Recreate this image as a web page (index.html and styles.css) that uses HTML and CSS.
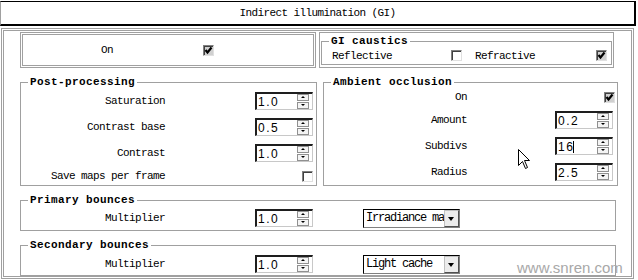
FILE: index.html
```html
<!DOCTYPE html>
<html lang="en">
<head>
    <meta charset="UTF-8">
    <title>Indirect illumination (GI)</title>
    <link rel="stylesheet" href="styles.css">
</head>
<body>
    <div class="title">Indirect illumination (GI)</div>

    <div class="rollout">
        <div class="top-row">
            <div class="on-box">
                <span class="on-label">On</span>
                <span class="check on"><svg viewBox="0 0 9 9"><path d="M1.5 4L3.5 6.5L7.5 1.5" /></svg></span>
            </div>
            <div class="caustics-box">
                <fieldset class="group caustics">
                    <legend>GI caustics</legend>
                    <div class="caustics-row">
                        <span class="c-label">Reflective</span>
                        <span class="check"></span>
                        <span class="c-label second">Refractive</span>
                        <span class="check on"><svg viewBox="0 0 9 9"><path d="M1.5 4L3.5 6.5L7.5 1.5" /></svg></span>
                    </div>
                </fieldset>
            </div>
        </div>

        <div class="mid-row">
            <fieldset class="group post">
                <legend>Post-processing</legend>
                <div class="rows">
                    <span class="label">Saturation</span>
                    <div class="spin"><span class="val">1.0</span><span class="arrows"><i class="up"></i><i class="down"></i></span></div>

                    <span class="label">Contrast base</span>
                    <div class="spin"><span class="val">0.5</span><span class="arrows"><i class="up"></i><i class="down"></i></span></div>

                    <span class="label">Contrast</span>
                    <div class="spin"><span class="val">1.0</span><span class="arrows"><i class="up"></i><i class="down"></i></span></div>

                    <span class="label">Save maps per frame</span>
                    <span class="check"></span>
                </div>
            </fieldset>

            <fieldset class="group ao">
                <legend>Ambient occlusion</legend>
                <div class="rows">
                    <span class="label">On</span>
                    <span class="check on"><svg viewBox="0 0 9 9"><path d="M1.5 4L3.5 6.5L7.5 1.5" /></svg></span>

                    <span class="label">Amount</span>
                    <div class="spin"><span class="val">0.2</span><span class="arrows"><i class="up"></i><i class="down"></i></span></div>

                    <span class="label">Subdivs</span>
                    <div class="spin"><span class="val">16<b class="caret"></b></span><span class="arrows"><i class="up"></i><i class="down"></i></span></div>

                    <span class="label">Radius</span>
                    <div class="spin"><span class="val">2.5</span><span class="arrows"><i class="up"></i><i class="down"></i></span></div>
                </div>
            </fieldset>
        </div>

        <fieldset class="group bounce primary">
            <legend>Primary bounces</legend>
            <div class="bounce-row">
                <span class="label">Multiplier</span>
                <div class="spin"><span class="val">1.0</span><span class="arrows"><i class="up"></i><i class="down"></i></span></div>
                <div class="drop"><span class="drop-text">Irradiance map</span><span class="drop-btn"></span></div>
            </div>
        </fieldset>

        <fieldset class="group bounce secondary">
            <legend>Secondary bounces</legend>
            <div class="bounce-row">
                <span class="label">Multiplier</span>
                <div class="spin"><span class="val">1.0</span><span class="arrows"><i class="up"></i><i class="down"></i></span></div>
                <div class="drop"><span class="drop-text">Light cache</span><span class="drop-btn"></span></div>
            </div>
        </fieldset>
    </div>

    <div class="watermark">www.snren.com</div>

    <svg class="cursor" width="13" height="21" viewBox="0 0 13 21">
        <path d="M0.5 0.5L0.5 16.5L4.5 12.5L7.5 19.5L9.5 18.5L6.5 11.5L11.5 11.5Z" fill="#fff" stroke="#000" stroke-width="1"/>
    </svg>
</body>
</html>
```

FILE: styles.css
```css
:root {
    --line: #a0a0a0;
    --dark: #1e1e1e;
    --light: #c8c8c8;
}

body {
    margin: 0;
    width: 638px;
    height: 280px;
    overflow: hidden;
    position: relative;
    background: #fff;
    color: #000;
    font-family: "Liberation Mono", "DejaVu Sans Mono", monospace;
    font-size: 11px;
    letter-spacing: -0.6px;
}

.title {
    box-sizing: border-box;
    margin-top: 1px;
    width: 636px;
    height: 25px;
    border-top: 1px solid #000;
    border-bottom: 2px solid #000;
    border-left: 1px solid var(--line);
    border-right: 2px solid #000;
    text-align: center;
    line-height: 22px;
}

.rollout {
    box-sizing: border-box;
    margin: 2px 0 0 1px;
    width: 633px;
    height: 251px;
    border: 3px double var(--line);
    padding: 1px 0 0 16px;
}

/* top row */
.top-row {
    display: flex;
    height: 36px;
}

.on-box {
    box-sizing: border-box;
    width: 296px;
    height: 36px;
    border: 3px double var(--line);
    display: flex;
    align-items: center;
}

.on-label {
    width: 90px;
    text-align: right;
}

.on-box .check {
    margin-left: 90px;
}

.caustics-box {
    box-sizing: border-box;
    margin-left: 3px;
    width: 295px;
    height: 36px;
    border: 1px solid var(--line);
    padding: 2px 1px 0;
}

.caustics-row {
    display: flex;
    align-items: center;
    height: 17px;
    padding-left: 10px;
}

.c-label {
    width: 119px;
}

.c-label.second {
    margin-left: 13px;
    width: 121px;
}

/* group boxes */
.group {
    margin: 0;
    padding: 0;
    min-width: 0;
    border: 1px solid var(--line);
}

.group legend {
    margin-left: 7px;
    padding: 0 2px;
    font-weight: bold;
    line-height: 12px;
    letter-spacing: 0.4px;
}

.mid-row {
    display: flex;
    margin-top: 8px;
}

.post {
    width: 295px;
}

.ao {
    width: 293px;
    margin-left: 6px;
}

.rows {
    display: grid;
    grid-template-columns: 144px 1fr;
    align-items: center;
    row-gap: 8px;
}

.post .rows {
    grid-template-rows: 18px 18px 18px 12px;
    padding: 4px 0 2px;
}

.ao .rows {
    grid-template-columns: 143px 1fr;
    grid-template-rows: 12px 18px 18px 18px;
    padding: 3px 0 4px;
}

.label {
    text-align: right;
    white-space: nowrap;
}

.rows .spin,
.rows .check {
    justify-self: end;
}

.post .spin { margin-right: 3px; }
.post .check { margin-right: 3px; }
.ao .spin { margin-right: 4px; }
.ao .check { margin-right: 2px; }

.bounce {
    width: 594px;
    margin-top: 8px;
}

.bounce-row {
    display: flex;
    align-items: center;
    height: 18px;
}

.primary .bounce-row { padding: 3px 0 3px; }
.secondary .bounce-row { padding: 4px 0 2px; }

.bounce-row .label {
    width: 144px;
}

.bounce-row .spin {
    margin-left: 90px;
}

.bounce-row .drop {
    margin-left: 50px;
}

/* checkbox */
.check {
    box-sizing: border-box;
    display: inline-block;
    width: 11px;
    height: 11px;
    border-top: 1px solid #808080;
    border-left: 1px solid #808080;
    border-right: 1px solid #e0e0e0;
    border-bottom: 1px solid #e0e0e0;
    box-shadow: inset 1px 1px 0 #404040;
    background: #fff;
}

.check.on {
    background: #d0d0d0;
}

.check svg {
    display: block;
    width: 9px;
    height: 9px;
}

.check path {
    fill: none;
    stroke: #000;
    stroke-width: 2.2;
}

/* spinner */
.spin {
    box-sizing: border-box;
    display: flex;
    align-items: center;
    width: 58px;
    height: 18px;
    border-top: 2px solid var(--dark);
    border-left: 2px solid var(--dark);
    border-right: 1px solid var(--light);
    border-bottom: 1px solid var(--light);
    background: #fff;
}

.val {
    font-family: "Liberation Sans", Arial, sans-serif;
    font-size: 12px;
    letter-spacing: 1.5px;
    padding-left: 1px;
    display: flex;
    align-items: center;
}

.caret {
    display: inline-block;
    width: 1px;
    height: 12px;
    background: #000;
    margin-left: -1px;
}

.arrows {
    margin-left: auto;
    margin-right: 3px;
    display: flex;
    flex-direction: column;
    gap: 1px;
}

.arrows i {
    box-sizing: border-box;
    position: relative;
    display: block;
    width: 12px;
    height: 7px;
    border: 1px solid #909090;
    background: #f4f4f4;
}

.arrows i::after {
    content: "";
    position: absolute;
    left: 3px;
    top: 1px;
    border-left: 2px solid transparent;
    border-right: 2px solid transparent;
}

.arrows .up::after {
    border-bottom: 2px solid #000;
}

.arrows .down::after {
    border-top: 2px solid #000;
}

/* dropdown */
.drop {
    box-sizing: border-box;
    display: flex;
    width: 97px;
    height: 19px;
    border-top: 1px solid #000;
    border-left: 1px solid #000;
    border-bottom: 1px solid #808080;
    border-right: 1px solid #808080;
    background: #fff;
}

.drop-text {
    flex: 1;
    overflow: hidden;
    white-space: nowrap;
    padding-left: 2px;
    line-height: 17px;
    font-size: 12px;
    letter-spacing: -1.2px;
}

.drop-btn {
    box-sizing: border-box;
    position: relative;
    width: 15px;
    height: 17px;
    background: #ececec;
    border: 1px solid #505050;
    border-top-color: #c0c0c0;
    border-left-color: #c0c0c0;
}

.drop-btn::after {
    content: "";
    position: absolute;
    left: 3px;
    top: 6px;
    border-left: 3.5px solid transparent;
    border-right: 3.5px solid transparent;
    border-top: 4px solid #000;
}

/* overlays */
.watermark {
    position: absolute;
    left: 517px;
    top: 259px;
    font-family: "Liberation Sans", Arial, sans-serif;
    font-size: 15px;
    letter-spacing: 0;
    color: #a8a8a8;
}

.cursor {
    position: absolute;
    left: 518px;
    top: 149px;
}
```
